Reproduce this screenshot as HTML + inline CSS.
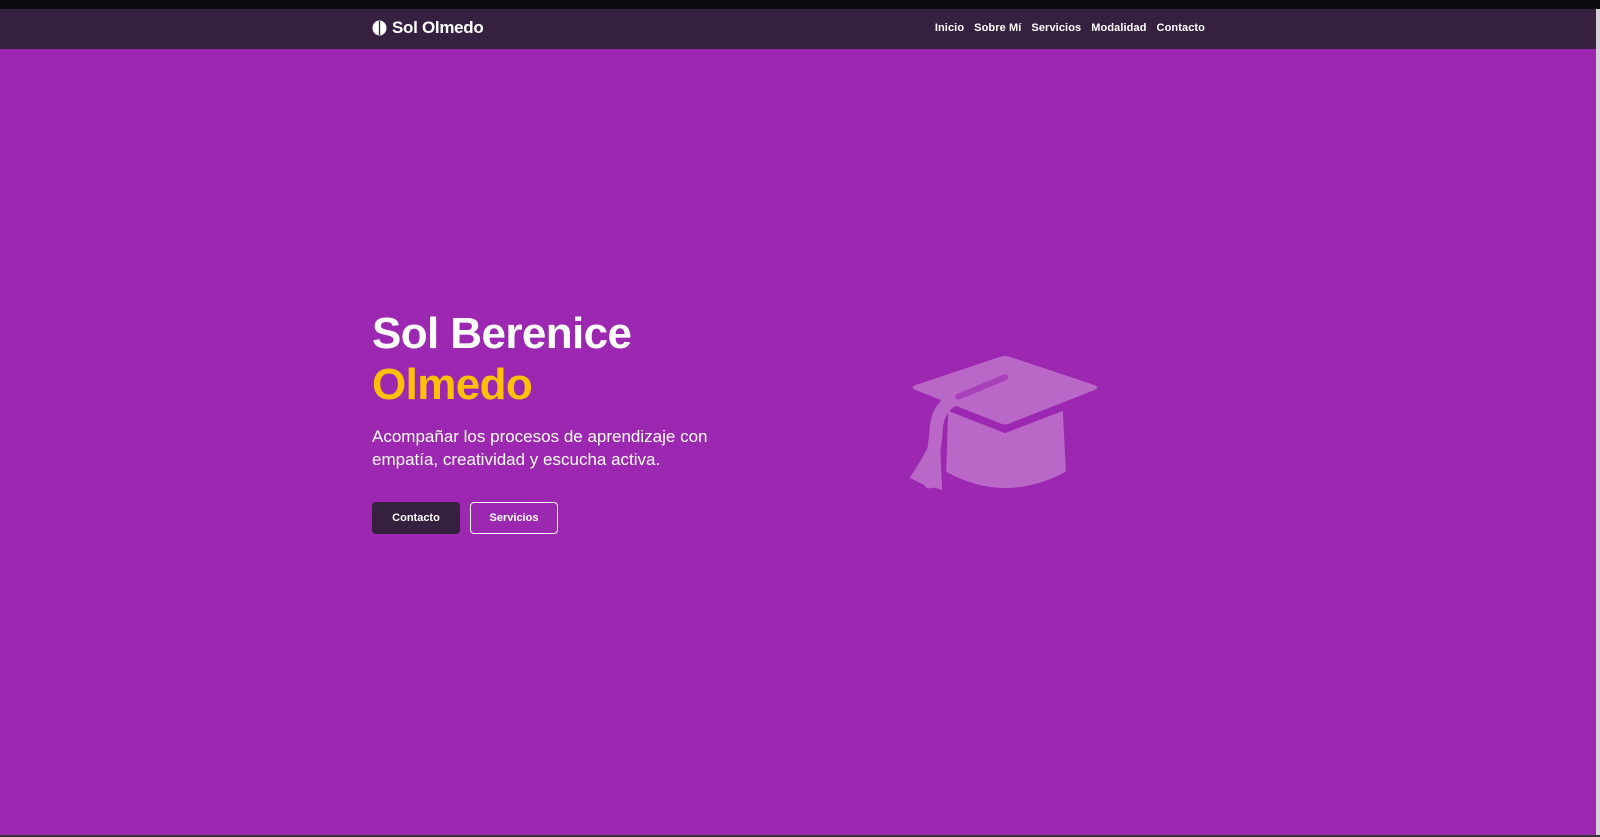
<!DOCTYPE html>
<html><head><meta charset="utf-8"><style>
*{margin:0;padding:0;box-sizing:border-box}
html,body{width:1600px;height:837px;overflow:hidden;background:#9c27b0;font-family:"Liberation Sans",sans-serif}
.top{position:absolute;left:0;top:0;width:1600px;height:9px;background:#0b0a10}
.nav{position:absolute;left:0;top:9px;width:1600px;height:40px;background:#35203f}
.logo{position:absolute;left:372px;top:9px;color:#fff;font-weight:bold;font-size:17px;display:flex;align-items:center;gap:5px;letter-spacing:-0.3px}
.links{position:absolute;right:395px;top:13px;color:#fff;font-weight:bold;font-size:11px;display:flex;gap:10px;letter-spacing:0.1px}
.sb{position:absolute;right:0;top:9px;width:4px;height:828px;background:#d9d0dc}
.bot{position:absolute;left:0;top:835px;width:1600px;height:2px;background:#333}
h1{position:absolute;left:372px;top:308px;font-size:44px;line-height:51px;color:#fff;font-weight:bold;letter-spacing:-0.6px}
h1 span{color:#ffc107}
p{position:absolute;left:372px;top:425px;width:360px;font-size:17px;line-height:23px;color:#fff}
.b{position:absolute;top:502px;height:32px;width:88px;border-radius:4px;font-size:11px;font-weight:bold;color:#fff;display:flex;align-items:center;justify-content:center}
.b1{left:372px;background:#35203f}
.b2{left:470px;border:1px solid #fff}
svg.cap{position:absolute;left:905px;top:352px}
</style></head><body>
<div class="top"></div>
<div class="nav">
<div class="logo"><svg width="15" height="16" viewBox="0 0 15 16"><ellipse cx="7.5" cy="8" rx="7" ry="7.5" fill="#fff"/><line x1="7.5" y1="1" x2="7.5" y2="15" stroke="#35203f" stroke-width="1.3"/></svg>Sol Olmedo</div>
<div class="links"><span>Inicio</span><span>Sobre Mí</span><span>Servicios</span><span>Modalidad</span><span>Contacto</span></div>
</div>
<div class="sb"></div>
<h1>Sol Berenice<br><span>Olmedo</span></h1>
<p>Acompañar los procesos de aprendizaje con empatía, creatividad y escucha activa.</p>
<div class="b b1">Contacto</div>
<div class="b b2">Servicios</div>
<svg class="cap" width="200" height="140" viewBox="0 0 196 138">
<path d="M42,58 L98,80 L155,58 L158,118 Q98,150 40,118 Z" fill="#ba68c8"/>
<path d="M8,30 L92,2 Q98,0 104,2 L188,30 Q196,35 188,40 L104,73 Q98,76 92,73 L8,40 Q0,35 8,30 Z" fill="#ba68c8" stroke="#9c27b0" stroke-width="6"/>
<path d="M100,24 L45,48 Q30,58 30,80 L24,128" stroke="#ba68c8" stroke-width="13" fill="none" stroke-linecap="round"/>
<path d="M98,25 L52,44" stroke="#9c27b0" stroke-width="6" fill="none" stroke-linecap="round" opacity="0.6"/>
<path d="M24,90 L34,90 L36,136 L16,130 L4,124 Q14,110 24,90Z" fill="#ba68c8"/>
</svg>
<div class="bot"></div>
</body></html>
